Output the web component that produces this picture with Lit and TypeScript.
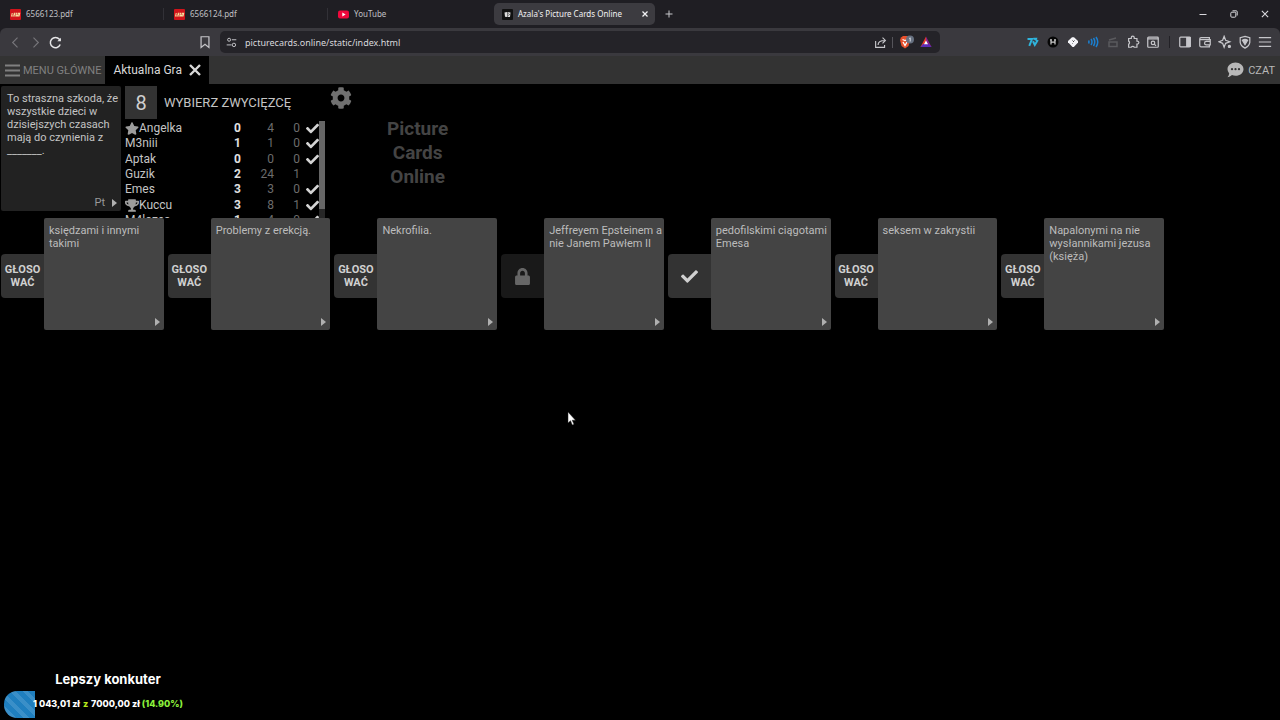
import { LitElement, html, css, svg, nothing } from "lit";
import { customElement } from "lit/decorators.js";
import { classMap } from "lit/directives/class-map.js";

const CHECK = "M173.9 439.4L7.5 273c-10-10-10-26.200 0-36.200l36.200-36.200c10-10 26.200-10 36.200 0L192 312.700 432.100 72.600c10-10 26.200-10 36.200 0l36.200 36.200c10 10 10 26.200 0 36.200L210.100 439.400c-10 10-26.200 10-36.200 0z";
const STAR = "M259.300 17.800L194 150.200 47.900 171.500c-26.200 3.800-36.700 36.100-17.700 54.600l105.700 103-25 145.500c-4.500 26.300 23.200 46 46.400 33.700L288 439.600l130.700 68.700c23.200 12.200 50.900-7.400 46.400-33.700l-25-145.500 105.700-103c19-18.500 8.500-50.800-17.700-54.600L382 150.200 316.700 17.800c-11.700-23.600-45.600-23.900-57.400 0z";
const TROPHY = "M552 64H448V24c0-13.300-10.700-24-24-24H152c-13.300 0-24 10.700-24 24v40H24C10.700 64 0 74.700 0 88v56c0 35.700 22.500 72.400 61.900 100.700 31.500 22.700 69.800 37.100 110 41.700C203.300 338.500 240 360 240 360v72h-48c-35.300 0-64 20.700-64 56v12c0 6.600 5.400 12 12 12h296c6.600 0 12-5.400 12-12v-12c0-35.300-28.700-56-64-56h-48v-72s36.700-21.500 68.100-73.600c40.300-4.600 78.600-19 110-41.700 39.300-28.300 61.900-65 61.900-100.700V88c0-13.300-10.700-24-24-24zM99.300 192.800C74.900 175.200 64 155.600 64 144v-16h64.200c1 32.600 5.800 61.200 12.800 86.200-15.100-5.200-29.200-12.400-41.700-21.400zM512 144c0 16.100-17.700 36.100-35.300 48.800-12.500 9-26.700 16.200-41.800 21.400 7-25 11.800-53.600 12.800-86.200H512v16z";
const GEAR = "M487.400 315.700l-42.600-24.600c4.300-23.200 4.300-47 0-70.200l42.600-24.600c4.900-2.800 7.100-8.600 5.500-14-11.100-35.600-30-67.800-54.700-94.600-3.800-4.100-10-5.100-14.800-2.300L380.800 110c-17.900-15.400-38.500-27.300-60.800-35.100V25.800c0-5.600-3.900-10.500-9.400-11.700-36.700-8.200-74.300-7.800-109.200 0-5.500 1.200-9.400 6.100-9.400 11.700V75c-22.200 7.900-42.800 19.800-60.800 35.100L88.700 85.500c-4.900-2.800-11-1.900-14.800 2.300-24.700 26.700-43.600 58.900-54.700 94.600-1.700 5.400.6 11.200 5.500 14L67.300 221c-4.300 23.200-4.300 47 0 70.200l-42.600 24.600c-4.900 2.800-7.100 8.600-5.500 14 11.100 35.600 30 67.800 54.700 94.600 3.800 4.100 10 5.100 14.800 2.300l42.600-24.600c17.900 15.400 38.500 27.300 60.800 35.100v49.200c0 5.600 3.900 10.500 9.400 11.700 36.700 8.200 74.300 7.800 109.200 0 5.500-1.200 9.400-6.100 9.400-11.700v-49.200c22.200-7.900 42.800-19.800 60.800-35.100l42.600 24.600c4.900 2.800 11 1.900 14.800-2.300 24.700-26.700 43.600-58.900 54.700-94.600 1.500-5.500-.7-11.300-5.600-14.100zM256 336c-44.100 0-80-35.900-80-80s35.900-80 80-80 80 35.900 80 80-35.900 80-80 80z";
const LOCK = "M400 224h-24v-72C376 68.200 307.800 0 224 0S72 68.200 72 152v72H48c-26.500 0-48 21.500-48 48v192c0 26.500 21.500 48 48 48h352c26.500 0 48-21.500 48-48V272c0-26.500-21.500-48-48-48zm-104 0H152v-72c0-39.700 32.300-72 72-72s72 32.300 72 72v72z";
const CROSS = "M6 6L26 26M26 6L6 26";

const solid = (cls: string, box: string, d: string) =>
  html`<svg class=${cls} viewBox=${box} fill="currentColor" aria-hidden="true"><path d=${d}></path></svg>`;
const line = (size: number, body: unknown) =>
  html`<svg width=${size} height=${size} viewBox="0 0 16 16" fill="none" stroke="currentColor" stroke-width="1.4" aria-hidden="true">${body}</svg>`;

const lego = html`<svg width="11" height="11" viewBox="0 0 11 11" aria-hidden="true">
  <rect width="11" height="11" rx="1" fill="#d0141b"></rect>
  <path d="M1.800 4V7H3M5 4.200H3.900V7H5M3.900 5.500H4.900M7 4.200H6V7H7V5.700M8 4.200H9.300V7H8Z" transform="translate(1.300 0) skewX(-12)" fill="none" stroke="#f6e3a0" stroke-width="1"></path></svg>`;
const youtube = html`<svg width="11" height="11" viewBox="0 0 11 11" aria-hidden="true">
  <rect y="1.500" width="11" height="8" rx="2" fill="#f0083c"></rect><path d="M4.300 3.600L7.600 5.500L4.300 7.400Z" fill="#fff"></path></svg>`;
const cardsIcon = html`<svg width="11" height="11" viewBox="0 0 11 11" aria-hidden="true">
  <rect width="11" height="11" rx="1" fill="#111"></rect><path d="M2.500 3.500L5 3V8L3 7.800ZM5.500 3L8.500 3.500L8 8H5.500Z" fill="#ddd"></path><path d="M6.500 4.500L7.300 5.500L6.500 6.500" stroke="#222" fill="none" stroke-width=".8"></path></svg>`;

const extensions = [
  { label: "7TV", icon: html`<svg width="12" height="12" viewBox="0 0 12 12" fill="none" stroke="#2fb4dc" stroke-width="2"><path d="M.500 3H5L2.300 9.800M6 5.200L7.800 9L10.800 4M6.300 2.800H9L8.300 4.500"></path></svg>` },
  { label: "Rozszerzenie H", icon: html`<svg width="12" height="12" viewBox="0 0 12 12"><circle cx="6" cy="6" r="5.500" fill="#060606"></circle><path d="M4 3.500V8.500M8 3.500V8.500M4 6.200H8M3 3.800H5M7 3.800H9" stroke="#ccc" stroke-width="1.200" fill="none"></path></svg>` },
  { label: "Romb", icon: html`<svg width="12" height="12" viewBox="0 0 12 12"><path d="M5 1.200H7L11 5V6.500L6.800 11H5.500L1 6.300V5Z" fill="#f4f4f8"></path><path d="M5.500 4.500L7 6M7 4L7.500 4.500M5 7L5.500 7.500" stroke="#444" stroke-width="1"></path></svg>` },
  { label: "Dźwięk", icon: html`<svg width="12" height="12" viewBox="0 0 12 12" fill="none" stroke="#1b7fd0" stroke-width="1.500"><path d="M1.500 4.500Q2.500 6 1.500 7.500M4 3Q6 6 4 9M6.500 2Q9 6 6.500 10M9 1Q12.500 6 9 11"></path></svg>` },
  { label: "Klaps", icon: html`<svg width="12" height="12" viewBox="0 0 12 12" fill="none" stroke="#5a5a5e" stroke-width="1.500"><path d="M2 4L9 2M2 6H10V10.500H2Z"></path></svg>` },
  { label: "Rozszerzenia", icon: line(14, svg`<path d="M3 4H6V3A1.700 1.700 0 0 1 9.400 3V4H12.500V7H13A1.700 1.700 0 0 1 13 10.400H12.500V14H9.500A2 2 0 0 0 6 14H3V10.500A2 2 0 0 0 3 7Z"></path>`) },
  { label: "Szukaj kart", icon: line(14, svg`<rect x="2" y="2.500" width="12" height="11.500" rx="1"></rect><path d="M2 4.500H14M9.500 10.500L11.500 12.500" ></path><circle cx="8" cy="9" r="2"></circle>`) },
];
const panels = [
  { label: "Panel boczny", icon: line(14, svg`<rect x="2" y="2.500" width="12" height="11" rx="1"></rect><path d="M10 3H14V13H10Z" fill="currentColor"></path>`) },
  { label: "Portfel", icon: line(14, svg`<path d="M13 5V3H3.500A1.500 1.500 0 0 0 2 4.500V12A1.500 1.500 0 0 0 3.500 13.500H13V11.500M2.500 5.200H14V11.300H9.500A2 2 0 0 1 9.500 7.300H14"></path>`) },
  { label: "Leo", icon: line(14, svg`<path d="M7 1.500L8.700 6L13.500 7.700L8.700 9.500L7 14L5.300 9.500L1 7.700L5.300 6Z"></path><circle cx="13" cy="13" r="1.200" fill="currentColor"></circle>`) },
  { label: "VPN", icon: line(14, svg`<path d="M8 1.500L13.500 3V8.500Q13 12.500 8 15Q3 12.500 2.500 8.500V3Z"></path><path d="M5 6Q8 3.800 11 6L8 11Z" fill="currentColor"></path>`) },
  { label: "Menu przeglądarki", icon: line(14, svg`<path d="M1 3H15M1 8H15M1 13H15"></path>`) },
];

const players = [
  { name: "Angelka", mark: "star", a: 0, b: 4, c: 0, ready: true },
  { name: "M3niii", mark: "", a: 1, b: 1, c: 0, ready: true },
  { name: "Aptak", mark: "", a: 0, b: 0, c: 0, ready: true },
  { name: "Guzik", mark: "", a: 2, b: 24, c: 1, ready: false },
  { name: "Emes", mark: "", a: 3, b: 3, c: 0, ready: true },
  { name: "Kuccu", mark: "trophy", a: 3, b: 8, c: 1, ready: true },
  { name: "M4lozes", mark: "", a: 1, b: 4, c: 0, ready: true },
];

const answers = [
  { text: "księdzami i innymi takimi", state: "vote" },
  { text: "Problemy z erekcją.", state: "vote" },
  { text: "Nekrofilia.", state: "vote" },
  { text: "Jeffreyem Epsteinem a nie Janem Pawłem II", state: "locked" },
  { text: "pedofilskimi ciągotami Emesa", state: "chosen" },
  { text: "seksem w zakrystii", state: "vote" },
  { text: "Napalonymi na nie wysłannikami jezusa (księża)", state: "vote" },
];

const goal = { current: "1 043,01 zł", target: "7000,00 zł", percent: 14.9 };

@customElement("browser-chrome")
export class BrowserChrome extends LitElement {
  static styles = css`
    :host { display: block; font-family: "Noto Sans", sans-serif; font-size: 9px; color: #c8c8cc; background: #1f1e23; }
    button { font: inherit; color: inherit; background: none; border: 0; padding: 0; display: grid; place-items: center; cursor: pointer; }
    svg { display: block; }
    .strip { display: flex; height: 28px; align-items: center; font-size: 8px; }
    .tab { display: flex; align-items: center; gap: 5px; width: 164px; height: 22px; padding-left: 10px; box-sizing: border-box; color: #c0c0c4; }
    .tab.divided { border-right: 1px solid #323137; height: 12px; }
    .tab.active { width: 161px; margin-left: 2px; padding: 0 6px 0 8px; background: #3c3b40; border-radius: 5px; color: #f2f2f4; }
    .tab .title { flex: 1; white-space: nowrap; line-height: 12px; }
    .new { width: 28px; height: 22px; }
    .window { margin-left: auto; display: flex; }
    .window button { width: 31px; height: 28px; color: #d8d8dc; }
    .bar { display: flex; align-items: center; height: 28px; background: #3a393e; border-top-left-radius: 6px; border-top-right-radius: 6px; padding: 0 5px; }
    .bar button { width: 20px; height: 20px; color: #c6c6ca; }
    .bar .dim { color: #77767b; }
    .bar .mark { margin-left: auto; }
    .left { display: flex; width: 210px; }
    .address { flex: 1; display: flex; align-items: center; height: 22px; background: #242328; border-radius: 5px; margin: 0 83px 0 5px; padding: 0 4px 0 1px; }
    .url { flex: 1; min-width: 0; height: 20px; box-sizing: border-box; border: 0; background: none; outline: 0; padding: 0 4px; font: inherit; color: #d8d8dc; }
    .sep { width: 1px; height: 11px; background: #55545a; margin: 0 3px 0 2px; }
    .group { display: flex; align-items: center; }
    .gap { width: 1px; height: 12px; background: #222126; margin: 0 5px 0 6px; }
  `;
  render() {
    return html`
      <div class="strip">
        ${[[lego, "6566123.pdf"], [lego, "6566124.pdf"], [youtube, "YouTube"]].map(([icon, title], i) => html`
          <div class=${classMap({ tab: true, divided: i < 2 })}>${icon}<span class="title">${title}</span></div>`)}
        <div class="tab active">${cardsIcon}<span class="title">Azala's Picture Cards Online</span>
          <button aria-label="Zamknij kartę"><svg width="8" height="8" viewBox="0 0 32 32" stroke="currentColor" stroke-width="5"><path d=${CROSS}></path></svg></button></div>
        <button class="new" aria-label="Nowa karta"><svg width="8" height="8" viewBox="0 0 8 8" stroke="currentColor"><path d="M4 .500V7.500M.500 4H7.500"></path></svg></button>
        <div class="window">
          <button aria-label="Minimalizuj"><svg width="8" height="8" viewBox="0 0 8 8" stroke="currentColor"><path d="M.500 4.500H7.500"></path></svg></button>
          <button aria-label="Przywróć"><svg width="8" height="8" viewBox="0 0 8 8" stroke="currentColor" fill="none"><rect x=".8" y="2.200" width="5" height="5" rx="1"></rect><path d="M2.500 .800H6.200Q7.200 .800 7.200 1.800V5.500"></path></svg></button>
          <button aria-label="Zamknij"><svg width="10" height="10" viewBox="0 0 32 32" stroke="currentColor" stroke-width="3.500"><path d=${CROSS}></path></svg></button>
        </div>
      </div>
      <div class="bar">
        <div class="left">
          <button class="dim" aria-label="Wstecz">${line(13, svg`<path d="M10.500 2L4.500 8L10.500 14"></path>`)}</button>
          <button class="dim" aria-label="Dalej">${line(13, svg`<path d="M5.500 2L11.500 8L5.500 14"></path>`)}</button>
          <button aria-label="Odśwież"><svg width="13" height="13" viewBox="0 0 16 16" fill="none" stroke="#e6e6e8" stroke-width="1.800"><path d="M13.800 10.500A6.300 6.300 0 1 1 12.800 4L14 5.500"></path><path d="M14.600 2V6.500H10.200Z" fill="#e6e6e8" stroke="none"></path></svg></button>
          <button class="mark" aria-label="Zakładka">${line(14, svg`<path d="M3.500 2H12.500V14.200L8 10.500L3.500 14.200Z"></path>`)}</button>
        </div>
        <div class="address">
          <button aria-label="Informacje o witrynie">${line(11, svg`<circle cx="4.500" cy="4" r="2.200"></circle><path d="M8.500 4H15M1 11.500H8"></path><circle cx="11.500" cy="11.500" r="2.500"></circle>`)}</button>
          <input class="url" aria-label="Adres" value="picturecards.online/static/index.html" />
          <button aria-label="Udostępnij">${line(13, svg`<path d="M2 6V14H13V11M5 11Q5 5.500 13.500 5.500M10.500 2L14 5.500L10.500 9"></path>`)}</button>
          <span class="sep"></span>
          <button aria-label="Tarcze Brave"><svg width="16" height="14" viewBox="0 0 16 14"><path d="M3 2.500L5 1H9L11 2.500L12 5L10.500 11L7 13.500L3.500 11L2 5Z" fill="#e8502c"></path><path d="M4.500 4.500L7 5.500L9.500 4.500M5 7L7 10.500L9 7" stroke="#fff" stroke-width="1.300" fill="none"></path><circle cx="12" cy="4.500" r="4" fill="#667080"></circle><path d="M11.300 3.500L12.200 2.800V6.500" stroke="#e8eaf0" stroke-width=".9" fill="none"></path></svg></button>
          <button aria-label="Brave Rewards"><svg width="12" height="12" viewBox="0 0 12 12"><path d="M6 .500L.500 11H6Z" fill="#e23a2c"></path><path d="M6 .500L11.500 11H6Z" fill="#8a1f8c"></path><path d="M.500 11H11.500L8.500 8H3Z" fill="#5b2bb5"></path><path d="M6 4.500L8 8.300H4Z" fill="#fff"></path></svg></button>
        </div>
        <div class="group">${extensions.map((e) => html`<button aria-label=${e.label}>${e.icon}</button>`)}</div>
        <span class="gap"></span>
        <div class="group">${panels.map((e) => html`<button aria-label=${e.label}>${e.icon}</button>`)}</div>
      </div>`;
  }
}

@customElement("score-board")
export class ScoreBoard extends LitElement {
  static styles = css`
    :host { display: flex; flex: 1; min-height: 0; overflow: hidden; color: #c4c4c4; font-size: 12px; }
    .table { flex: 1; height: 107px; border-collapse: collapse; table-layout: fixed; }
    td, th { padding: 0; line-height: 15px; font-weight: 400; text-align: right; }
    .name { width: 88px; text-align: left; white-space: nowrap; }
    .points { width: 28px; font-weight: 700; color: #e0e0e0; }
    .faint { width: 33px; color: #6c6c6c; }
    .last { width: 26px; }
    .mark { width: 14px; height: 13px; color: #9c9c9c; vertical-align: -3px; }
    .ready { width: 13px; height: 13px; color: #d4d4d4; display: block; margin-left: auto; }
    .track { width: 6px; background: #262626; }
    .thumb { height: 88px; background: #666; }
  `;
  render() {
    return html`
      <table class="table"><tbody>
        ${players.map((p) => html`<tr>
          <th class="name" scope="row">${p.mark === "star" ? solid("mark", "0 0 576 512", STAR) : p.mark ? solid("mark", "0 0 576 512", TROPHY) : nothing}${p.name}</th>
          <td class="points">${p.a}</td><td class="faint">${p.b}</td><td class="faint last">${p.c}</td>
          <td>${p.ready ? solid("ready", "0 0 512 512", CHECK) : nothing}</td></tr>`)}
      </tbody></table>
      <div class="track"><div class="thumb"></div></div>`;
  }
}

@customElement("answer-card")
export class AnswerCard extends LitElement {
  static properties = { text: {}, state: {} };
  declare text: string;
  declare state: string;
  static styles = css`
    :host { display: flex; align-items: center; min-width: 0; }
    .vote { width: 43px; height: 44px; margin-top: 4px; padding: 0; border: 0; border-radius: 4px 0 0 4px; background: #333; color: #d0d0d0; font: 700 11px/13px Roboto, sans-serif; display: grid; place-items: center; cursor: pointer; }
    .vote.locked { background: #191919; color: #666; }
    .lock { width: 15px; height: 17px; }
    .check { width: 17px; height: 17px; }
    .card { flex: 1; min-width: 0; height: 112px; box-sizing: border-box; padding: 6px 0 4px 5px; border-radius: 2px; background: #444; color: #bcbcbc; font-size: 11px; line-height: 13px; display: flex; flex-direction: column; justify-content: space-between; }
    .more { width: 5px; height: 8px; margin-right: 4px; align-self: flex-end; color: #b0b0b0; }
  `;
  render() {
    return html`
      <button class=${classMap({ vote: true, locked: this.state === "locked" })} ?disabled=${this.state === "locked"} aria-label=${this.state === "vote" ? nothing : this.state}>
        ${this.state === "vote" ? html`<span>GŁOSO<br />WAĆ</span>` : this.state === "locked" ? solid("lock", "0 0 448 512", LOCK) : solid("check", "0 0 512 512", CHECK)}
      </button>
      <article class="card"><span>${this.text}</span>${solid("more", "0 0 5 8", "M0 0L5 4L0 8Z")}</article>`;
  }
}

@customElement("app-root")
export class AppRoot extends LitElement {
  static styles = css`
    :host { display: flex; flex-direction: column; min-height: 100vh; background: #000; font-family: Roboto, "Liberation Sans", sans-serif; color: #c4c4c4; position: relative; }
    button { font: inherit; color: inherit; background: none; border: 0; padding: 0; cursor: pointer; }
    svg { display: block; }
    .nav { display: flex; height: 28px; background: #333; font-size: 11px; }
    .nav button { display: flex; align-items: center; }
    .nav .menu { gap: 3px; padding: 0 4px 0 5px; color: #808080; }
    .current { display: flex; align-items: center; gap: 7px; padding: 0 8px; background: #000; color: #d8d8d8; font-size: 12px; }
    .nav .chat { margin-left: auto; gap: 4px; padding: 0 5px; color: #b8b8b8; }
    .top { display: flex; height: 134px; box-sizing: border-box; padding: 2px 0 0 1px; }
    .prompt { width: 120px; height: 125px; box-sizing: border-box; padding: 6px 0 2px 6px; border-radius: 2px; background: #222; font-size: 11px; line-height: 13px; display: flex; flex-direction: column; justify-content: space-between; }
    .pick { display: flex; align-items: center; align-self: flex-end; gap: 7px; margin-right: 4px; color: #999; }
    .tri { width: 5px; height: 8px; color: #b0b0b0; }
    .status { width: 200px; margin-left: 4px; display: flex; flex-direction: column; gap: 2px; }
    .head { display: flex; align-items: center; gap: 7px; height: 33px; }
    .timer { width: 32px; height: 33px; display: grid; place-items: center; background: #333; font-size: 20px; color: #d0d0d0; }
    .title { font-size: 13px; font-weight: 400; margin: 0; white-space: nowrap; }
    .settings { margin: 1px 0 0 5px; align-self: flex-start; color: #707070; }
    .gear { width: 22px; height: 22px; }
    .logo { margin: 31px 0 0 35px; font-size: 19px; line-height: 24px; font-weight: 700; text-align: center; color: #444; }
    .answers { display: grid; grid-template-columns: repeat(7, 1fr); gap: 4px; padding: 0 116px 0 1px; }
    .goal { margin: auto auto 2px 4px; width: 208px; font-family: Inter, sans-serif; font-weight: 800; color: #fff; text-align: center; }
    .name { margin: 0 0 4px; font-size: 13px; line-height: 16px; font-weight: 700; }
    .progress { position: relative; height: 27px; border-radius: 13px; overflow: hidden; }
    .fill { position: absolute; inset: 0 auto 0 0; background: repeating-linear-gradient(45deg, #1f7fbf 0 5px, #3a8fc8 5px 9px); }
    .amount { position: relative; font-size: 9px; line-height: 25px; white-space: nowrap; }
    .of { color: #b4e81c; margin: 0 1px; }
    .pct { color: #8cf03c; }
    .pointer { position: absolute; left: 567px; top: 411px; width: 9px; height: 15px; }
  `;
  render() {
    return html`
      <browser-chrome></browser-chrome>
      <nav class="nav">
        <button class="menu"><svg width="15" height="13" viewBox="0 0 15 13" stroke="currentColor" stroke-width="2"><path d="M0 1.500H15M0 6.500H15M0 11.500H15"></path></svg>MENU GŁÓWNE</button>
        <div class="current"><span>Aktualna Gra</span><button aria-label="Zamknij grę"><svg width="12" height="12" viewBox="0 0 12 12" stroke="currentColor" stroke-width="2.400"><path d="M1 1L11 11M11 1L1 11"></path></svg></button></div>
        <button class="chat"><svg width="17" height="16" viewBox="0 0 17 16"><path d="M8.500 .500C13 .500 16.500 3.500 16.500 7.200S13 13.800 8.500 13.800Q6.500 13.800 5 13.100Q3 15 .500 15.200Q2 13.500 2.200 11.500Q.500 9.500 .500 7.200C.500 3.500 4 .500 8.500 .500Z" fill="#b8b8b8"></path><circle cx="5" cy="7.200" r="1.100" fill="#333"></circle><circle cx="8.500" cy="7.200" r="1.100" fill="#333"></circle><circle cx="12" cy="7.200" r="1.100" fill="#333"></circle></svg>CZAT</button>
      </nav>
      <section class="top">
        <article class="prompt">
          <span>To straszna szkoda, że wszystkie dzieci w dzisiejszych czasach mają do czynienia z _______.</span>
          <span class="pick">Pt ${solid("tri", "0 0 5 8", "M0 0L5 4L0 8Z")}</span>
        </article>
        <div class="status">
          <div class="head"><span class="timer">8</span><h1 class="title">WYBIERZ ZWYCIĘZCĘ</h1></div>
          <score-board></score-board>
        </div>
        <button class="settings" aria-label="Ustawienia">${solid("gear", "0 0 512 512", GEAR)}</button>
        <div class="logo">Picture<br />Cards<br />Online</div>
      </section>
      <section class="answers">
        ${answers.map((a) => html`<answer-card .text=${a.text} .state=${a.state}></answer-card>`)}
      </section>
      <footer class="goal">
        <h2 class="name">Lepszy konkuter</h2>
        <div class="progress"><div class="fill" style="width:${goal.percent}%"></div>
          <div class="amount">${goal.current} <span class="of">z</span> ${goal.target} <span class="pct">(${goal.percent.toFixed(2)}%)</span></div></div>
      </footer>
      <svg class="pointer" viewBox="0 0 9 15" aria-hidden="true"><path d="M1 1V12L3.500 9.700L5.300 14L7 13.200L5.200 9.200H8.500Z" fill="#fff" stroke="#222" stroke-width=".5"></path></svg>`;
  }
}
